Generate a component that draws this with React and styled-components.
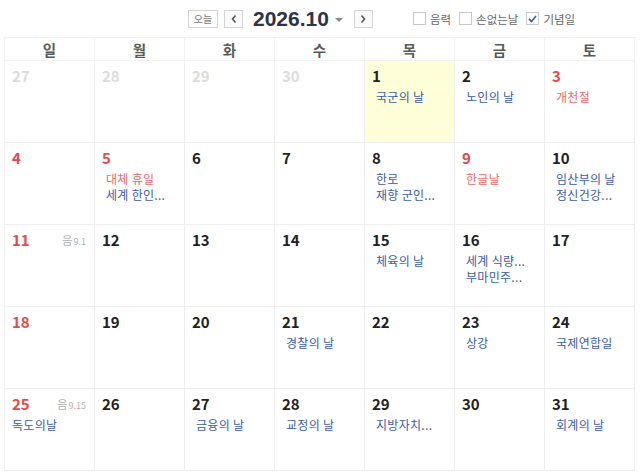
import React from "react";
import styled, { createGlobalStyle } from "styled-components";

const GlobalStyle = createGlobalStyle`
  html, body {
    margin: 0;
    padding: 0;
    background: #fff;
    font-family: "Noto Sans CJK KR", "Noto Sans", sans-serif;
  }
`;

const Page = styled.div`
  width: 640px;
  height: 472px;
  overflow: hidden;
  background: #fff;
`;

const Toolbar = styled.div`
  height: 37px;
  display: flex;
  align-items: center;
  padding-left: 188px;
  box-sizing: border-box;
`;

const TodayButton = styled.button`
  width: 30px;
  height: 18px;
  padding: 0;
  border: 1px solid #d4d4d4;
  background: #fff;
  color: #777;
  font-family: "Noto Sans CJK KR", sans-serif;
  font-size: 10px;
  line-height: 16px;
`;

const NavButton = styled.button`
  width: 19px;
  height: 18px;
  padding: 0;
  margin-left: ${props => props.gap || 0}px;
  border: 1px solid #d4d4d4;
  background: #fafafa;
  display: flex;
  align-items: center;
  justify-content: center;
`;

const Title = styled.div`
  margin-left: 10px;
  font-family: "Liberation Sans", Arial, sans-serif;
  font-weight: 700;
  font-size: 21px;
  color: #2e3448;
  line-height: 24px;
`;

const Caret = styled.span`
  margin-left: 6px;
  margin-top: 2px;
  width: 0;
  height: 0;
  border-left: 4px solid transparent;
  border-right: 4px solid transparent;
  border-top: 4px solid #888;
`;

const Options = styled.div`
  display: flex;
  align-items: center;
  margin-left: 40px;
  gap: 8px;
`;

const Option = styled.label`
  display: flex;
  align-items: center;
  gap: 4px;
  font-size: 11.5px;
  color: #666;
`;

const Box = styled.span`
  width: 11px;
  height: 11px;
  border: 1px solid #c8c8c8;
  background: #fff;
  display: flex;
  align-items: center;
  justify-content: center;
`;

const Grid = styled.div`
  margin-left: 4px;
  width: 631px;
  display: grid;
  grid-template-columns: repeat(7, 90px);
  grid-template-rows: 23px repeat(5, 82px);
  border-left: 1px solid #efefef;
  border-top: 1px solid #efefef;
`;

const DayName = styled.div`
  border-right: 1px solid #f2f2f2;
  border-bottom: 1px solid #f2f2f2;
  display: flex;
  align-items: center;
  justify-content: center;
  font-size: 14.5px;
  font-weight: 700;
  color: #5a5a5a;
`;

const Cell = styled.div`
  border-right: 1px solid #eeeeee;
  border-bottom: 1px solid #eeeeee;
  background: ${props => (props.today ? "#fefed8" : "#fff")};
  padding: 5px 8px 0 7px;
  box-sizing: border-box;
  position: relative;
`;

const DateNum = styled.div`
  font-size: 15px;
  font-weight: 700;
  line-height: 20px;
  color: ${props =>
    props.dim ? "#dcdcdc" : props.red ? "#e5484d" : "#222"};
`;

const Lunar = styled.span`
  position: absolute;
  top: 7px;
  right: 8px;
  font-size: 11.5px;
  color: #b0b0b0;
  small {
    font-size: 9px;
    margin-left: 1px;
  }
`;

const Events = styled.div`
  margin-top: 3px;
  padding-left: ${props => (props.flush ? 0 : 4)}px;
`;

const Event = styled.div`
  font-size: 12px;
  line-height: 16px;
  letter-spacing: 0.3px;
  white-space: nowrap;
  color: ${props => (props.red ? "#ec6767" : "#3b5ca6")};
`;

const Chevron = ({ dir }) => (
  <svg width="8" height="10" viewBox="0 0 8 10">
    <polyline
      points={dir === "left" ? "5.5,1.5 2.5,5 5.5,8.5" : "2.5,1.5 5.5,5 2.5,8.5"}
      fill="none"
      stroke="#555"
      strokeWidth="1.6"
    />
  </svg>
);

const days = ["일", "월", "화", "수", "목", "금", "토"];

const cells = [
  { d: 27, dim: true }, { d: 28, dim: true }, { d: 29, dim: true }, { d: 30, dim: true },
  { d: 1, today: true, ev: [["국군의 날"]] },
  { d: 2, ev: [["노인의 날"]] },
  { d: 3, red: true, ev: [["개천절", true]] },
  { d: 4, red: true },
  { d: 5, red: true, ev: [["대체 휴일", true], ["세계 한인..."]] },
  { d: 6 }, { d: 7 },
  { d: 8, ev: [["한로"], ["재향 군인..."]] },
  { d: 9, red: true, ev: [["한글날", true]] },
  { d: 10, ev: [["임산부의 날"], ["정신건강..."]] },
  { d: 11, red: true, lunar: "9.1" },
  { d: 12 }, { d: 13 }, { d: 14 },
  { d: 15, ev: [["체육의 날"]] },
  { d: 16, ev: [["세계 식량..."], ["부마민주..."]] },
  { d: 17 },
  { d: 18, red: true }, { d: 19 }, { d: 20 },
  { d: 21, ev: [["경찰의 날"]] },
  { d: 22 },
  { d: 23, ev: [["상강"]] },
  { d: 24, ev: [["국제연합일"]] },
  { d: 25, red: true, lunar: "9.15", flush: true, ev: [["독도의날"]] },
  { d: 26 },
  { d: 27, ev: [["금융의 날"]] },
  { d: 28, ev: [["교정의 날"]] },
  { d: 29, ev: [["지방자치..."]] },
  { d: 30 },
  { d: 31, ev: [["회계의 날"]] },
];

const App = () => (
  <Page>
    <GlobalStyle />
    <Toolbar>
      <TodayButton>오늘</TodayButton>
      <NavButton gap={6}>
        <Chevron dir="left" />
      </NavButton>
      <Title>2026.10</Title>
      <Caret />
      <NavButton gap={11}>
        <Chevron dir="right" />
      </NavButton>
      <Options>
        <Option>
          <Box />
          음력
        </Option>
        <Option>
          <Box />
          손없는날
        </Option>
        <Option>
          <Box>
            <svg width="9" height="8" viewBox="0 0 9 8">
              <polyline points="1,4 3.5,6.5 8,1" fill="none" stroke="#3a67b0" strokeWidth="1.8" />
            </svg>
          </Box>
          기념일
        </Option>
      </Options>
    </Toolbar>
    <Grid>
      {days.map(day => (
        <DayName key={day}>{day}</DayName>
      ))}
      {cells.map((c, i) => (
        <Cell key={i} today={c.today}>
          <DateNum dim={c.dim} red={c.red}>
            {c.d}
          </DateNum>
          {c.lunar && (
            <Lunar>
              음<small>{c.lunar}</small>
            </Lunar>
          )}
          {c.ev && (
            <Events flush={c.flush}>
              {c.ev.map(([text, red]) => (
                <Event key={text} red={red}>
                  {text}
                </Event>
              ))}
            </Events>
          )}
        </Cell>
      ))}
    </Grid>
  </Page>
);

export default App;
